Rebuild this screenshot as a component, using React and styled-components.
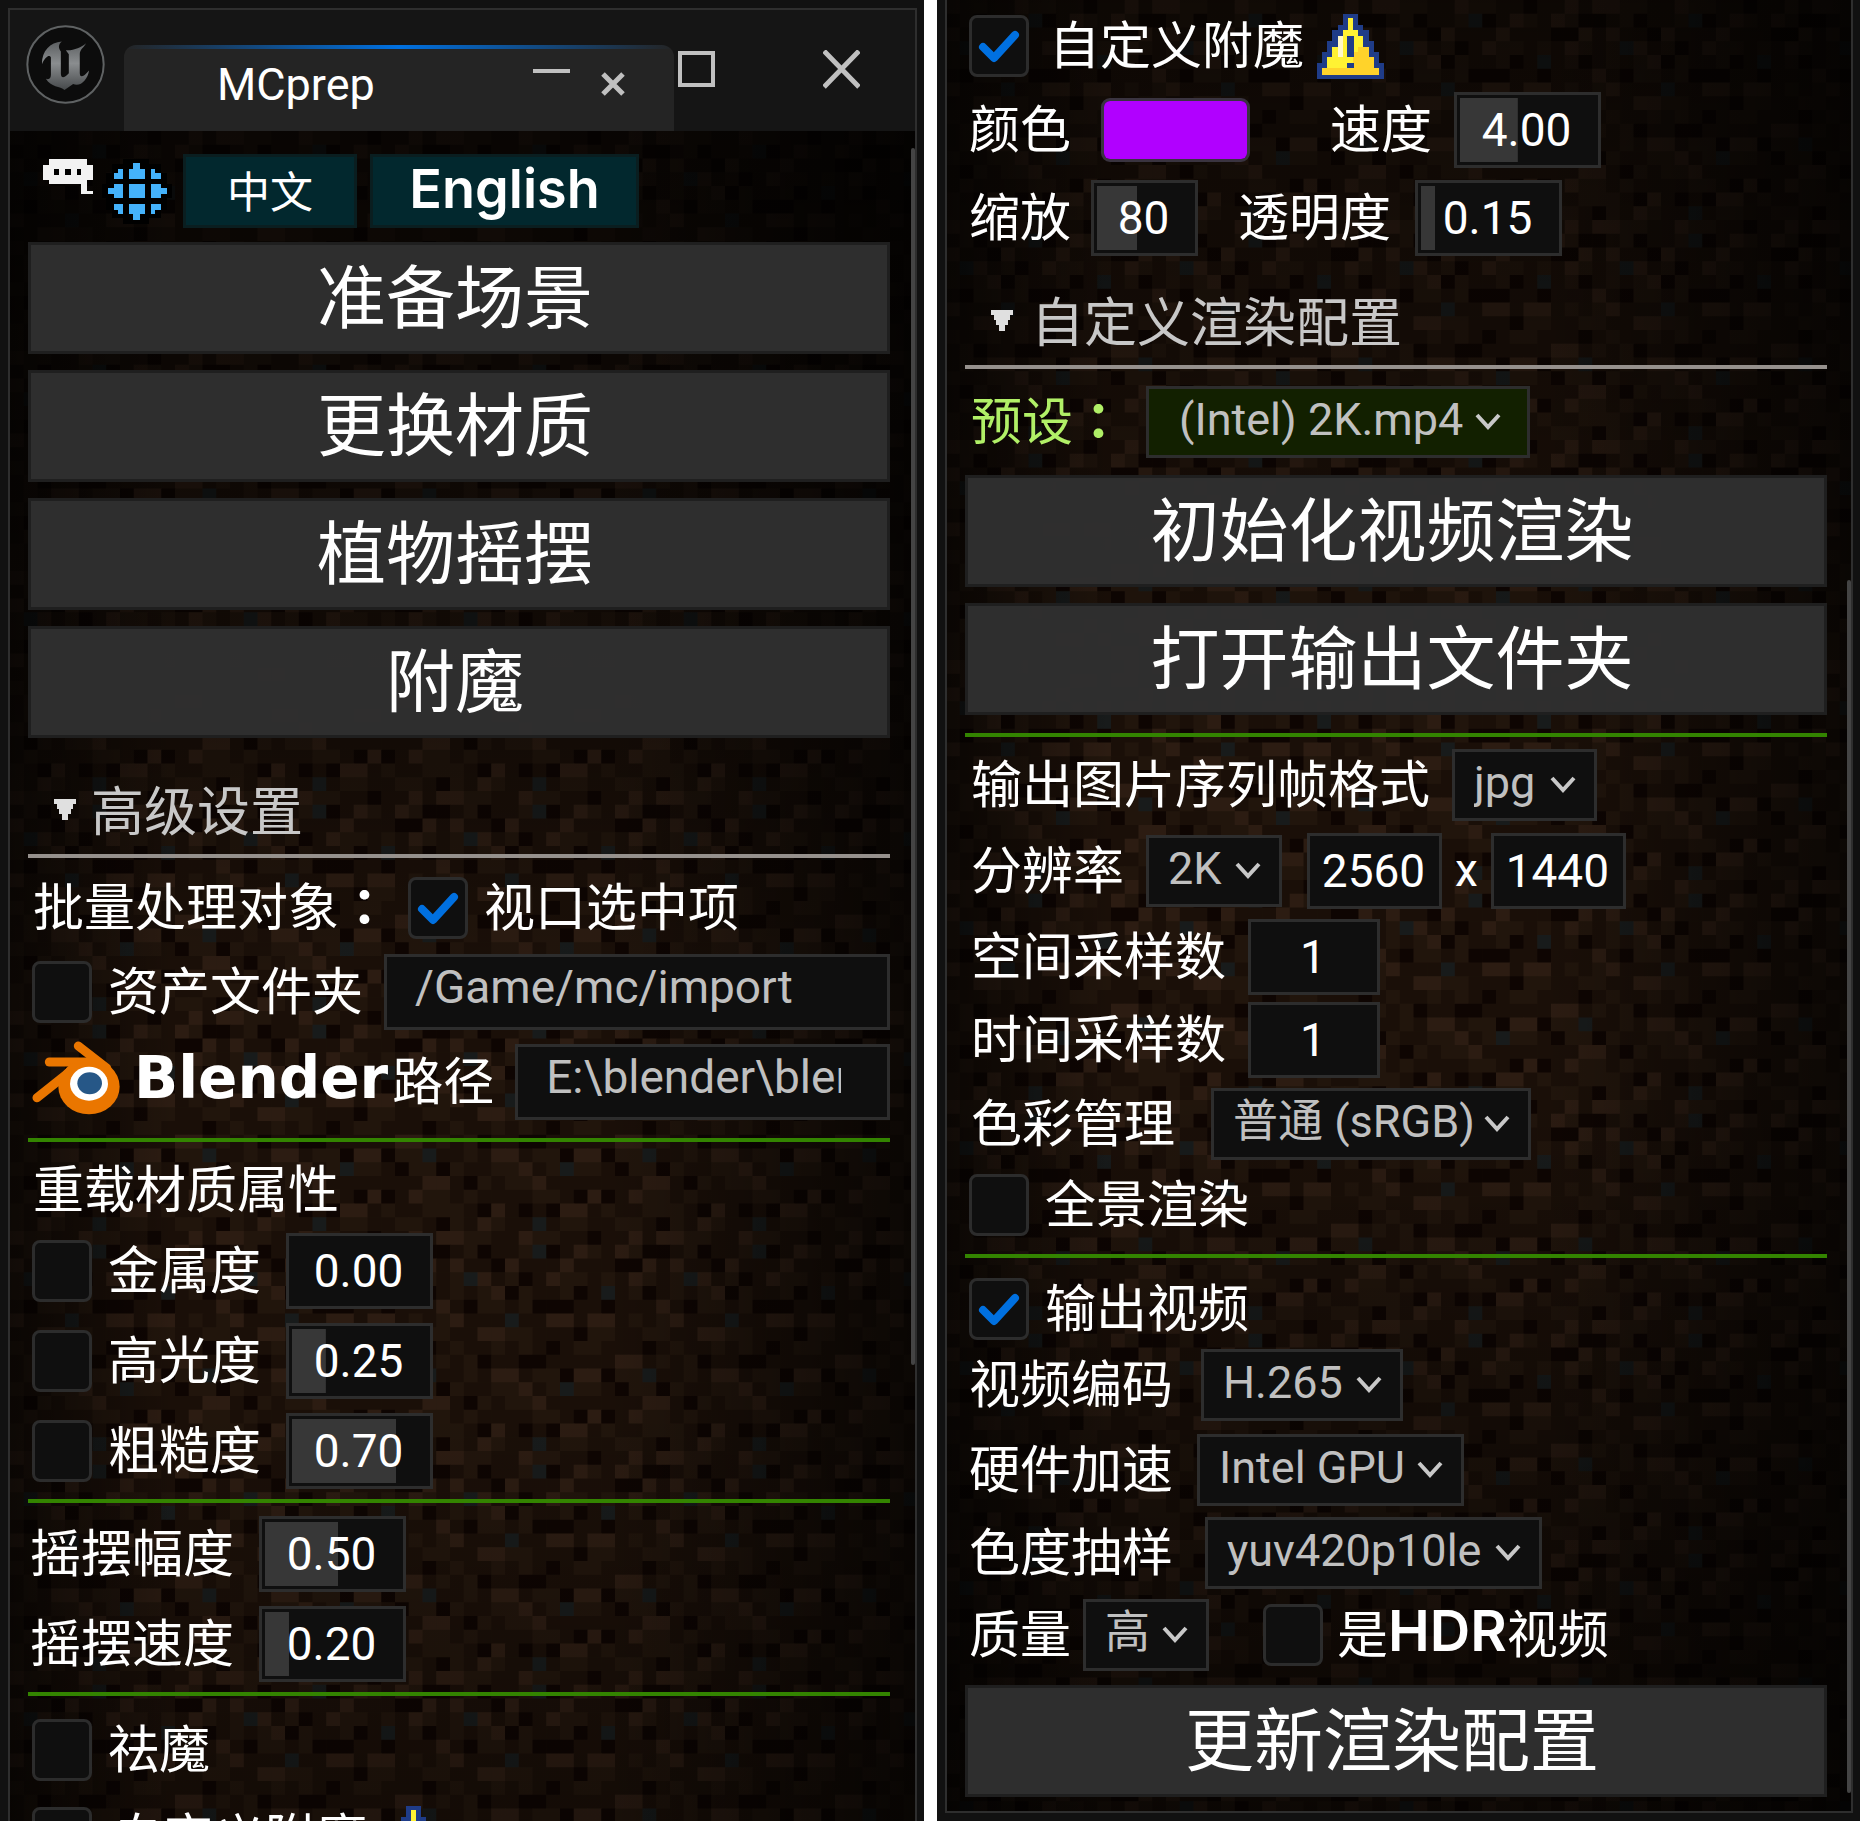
import React, { useState } from 'react';
import styled, { createGlobalStyle, css } from 'styled-components';

const GlobalStyle = createGlobalStyle`
  *, *::before, *::after { box-sizing: border-box; }
  html, body { margin: 0; background: #ffffff; }
  body { overflow: hidden; font-family: "Noto Sans CJK SC", sans-serif; }
  button, input, select { font: inherit; margin: 0; }
`;

const cjk = '"Noto Sans CJK SC", sans-serif';
const latin = 'Roboto, "Noto Sans CJK SC", sans-serif';

const Page = styled.main`
  display: grid;
  grid-template-columns: 924fr 923fr;
  gap: 13px;
  height: 100vh;
`;

const Window = styled.section`
  display: flex;
  min-width: 0;
  min-height: 0;
  padding: ${(p) => p.$pad};
  background: #111111;
`;

const Frame = styled.div`
  flex: 1;
  min-width: 0;
  display: flex;
  flex-direction: column;
  border: 2px solid #2e2e2e;
  border-width: ${(p) => p.$edges};
`;

const TitleBar = styled.header`
  position: relative;
  flex: none;
  display: flex;
  align-items: flex-start;
  height: 121px;
  padding: 15px 0 0 16px;
  background: #151515;
`;

const Tab = styled.div`
  display: flex;
  align-items: center;
  justify-content: space-between;
  width: 550px;
  height: 86px;
  margin: 20px 0 0 19px;
  padding: 0 49px 8px 93px;
  border-radius: 12px 12px 0 0;
  background: linear-gradient(90deg, #242424, #0070e0 50%, #242424) top / 100% 4px no-repeat, #242424;
  color: #ffffff;
  font: 45px/1 ${latin};
`;

const IconButton = styled.button`
  display: flex;
  padding: 0;
  border: 0;
  background: none;
  color: #c0c0c0;
`;

const WindowControls = styled.div`
  position: absolute;
  top: 40px;
  right: 55px;
  display: flex;
  gap: 108px;
`;

const Body = styled.div`
  position: relative;
  flex: 1;
  min-height: 0;
  overflow: hidden;
  padding: ${(p) => p.$pad};
  background: #1a0f08;
`;

const TextureLayer = styled.svg`
  position: absolute;
  inset: 0;
  width: 100%;
  height: 100%;
`;

const Shade = styled.div`
  position: absolute;
  inset: 0;
  background:
    linear-gradient(90deg, rgba(0, 0, 0, 0.6), transparent 18%, transparent 66%, rgba(0, 0, 0, 0.65)),
    ${(p) => p.$vertical};
`;

const ScrollThumb = styled.div`
  position: absolute;
  right: 0;
  top: ${(p) => p.$top};
  bottom: ${(p) => p.$bottom};
  width: 4px;
  border-radius: 2px;
  background: #444444;
`;

const Content = styled.div`
  position: relative;
  display: flex;
  flex-direction: column;
`;

const LanguageBar = styled.div`
  display: flex;
  align-items: center;
  height: 76px;
  margin-bottom: 13px;
  padding-left: 15px;
`;

const LanguageIcons = styled.div`
  display: flex;
  gap: 8px;
  margin-right: 11px;
`;

const LanguageButton = styled.button`
  width: ${(p) => p.$width};
  height: 74px;
  margin-right: 13px;
  padding: 0 0 4px;
  border: 3px solid #0a1e20;
  background: #02282e;
  color: #ffffff;
  font: ${(p) => (p.$bold ? '600 54px/64px Inter, sans-serif' : `43px/64px ${cjk}`)};
`;

const ActionStack = styled.div`
  display: flex;
  flex-direction: column;
  gap: 16px;
  margin-top: ${(p) => p.$before || '0'};
`;

const ActionButton = styled.button`
  height: 112px;
  padding: 0 8px 10px 0;
  border: 3px solid #1f1f1f;
  background: rgba(48, 48, 48, 0.97);
  color: #ffffff;
  font: 69px/1 ${cjk};
`;

const SectionHeader = styled.h2`
  display: flex;
  align-items: center;
  gap: ${(p) => p.$gap || '15px'};
  height: 92px;
  margin: ${(p) => p.$before} 0 0;
  padding: 0 0 4px 26px;
  border-bottom: 4px solid #96918d;
  color: #c8c8c8;
  font: 53px/1 ${cjk};
`;

const Rule = styled.hr`
  width: 100%;
  height: 4px;
  margin: ${(p) => p.$margin || '0'};
  border: 0;
  background: #338400;
`;

const GroupTitle = styled.h3`
  height: 72px;
  margin: 12px 0 0;
  padding-left: 5px;
  color: #ffffff;
  font: 51px/64px ${cjk};
`;

const Row = styled.div`
  display: flex;
  align-items: center;
  height: ${(p) => p.$height};
  padding-left: ${(p) => p.$indent || '4px'};
`;

const Label = styled.label`
  flex: none;
  display: flex;
  align-items: center;
  padding-bottom: 8px;
  margin-left: ${(p) => p.$gap || '0'};
  color: ${(p) => p.$color || '#ffffff'};
  font: 51px/1 ${cjk};
  white-space: nowrap;
`;

const Colon = styled.span`
  font-family: "Noto Sans CJK TC", sans-serif;
  font-weight: 700;
`;

const Wordmark = styled.span`
  padding-right: ${(p) => p.$after || '0'};
  font: ${(p) => p.$font};
`;

const CheckWrap = styled.span`
  flex: none;
  display: grid;
  place-items: center;
  margin-left: ${(p) => p.$gap || '0'};
  > * { grid-area: 1 / 1; }
  > svg { pointer-events: none; }
`;

const CheckBox = styled.input`
  appearance: none;
  width: 60px;
  height: 62px;
  border: 3px solid #2c2c2c;
  border-radius: 8px;
  background: #0f0f0f;
`;

const fieldLook = css`
  height: 76px;
  border: 3px solid #2d2d2d;
  border-radius: 0;
  background: #0f0f0f;
  outline: 0;
`;

const PathInput = styled.input`
  ${fieldLook}
  flex: 1;
  min-width: 0;
  margin-left: 21px;
  padding: 0 46px 10px 28px;
  color: #c0c0c0;
  font: 46px/60px ${latin};
`;

const NumberInput = styled.input`
  ${fieldLook}
  flex: none;
  width: ${(p) => p.$width || '147px'};
  margin-left: ${(p) => p.$gap || '22px'};
  padding: 0 2px 0 0;
  background: linear-gradient(#373737, #373737) 3px 3px / ${(p) => p.$fill || 0}% calc(100% - 6px) no-repeat, #0f0f0f;
  color: #ffffff;
  text-align: center;
  font: 46px/60px ${latin};
`;

const SelectWrap = styled.span`
  flex: none;
  display: grid;
  align-items: center;
  margin-left: ${(p) => p.$gap || '22px'};
  > * { grid-area: 1 / 1; }
  > svg {
    justify-self: end;
    margin-right: ${(p) => (p.$preset ? '28px' : '20px')};
    pointer-events: none;
  }
`;

const Select = styled.select`
  ${fieldLook}
  appearance: none;
  width: ${(p) => p.$width};
  height: 72px;
  padding: 0 0 4px ${(p) => (p.$preset ? '30px' : '19px')};
  background: ${(p) => (p.$preset ? '#122000' : '#0f0f0f')};
  color: #c0c0c0;
  font: 45px/60px ${latin};
`;

const Swatch = styled.input`
  appearance: none;
  width: 149px;
  height: 64px;
  margin-left: 30px;
  padding: 0;
  border: 3px solid #3a3440;
  border-radius: 9px;
  background: #b100ff;
  overflow: hidden;
  &::-webkit-color-swatch-wrapper { padding: 0; }
  &::-webkit-color-swatch { border: 0; }
`;

const Times = styled.span`
  padding: 0 13px 2px;
  color: #ffffff;
  font: 46px/1 ${latin};
`;

const WarningGlyph = styled.svg`
  flex: none;
  margin-left: 13px;
`;

const TILE = [
  'BBDBBLBLLMMBBLMM',
  'BLMBLMDDBMDBBMXD',
  'LBBBDDLBLBBDLBBB',
  'MMBMBLMBMXLBMDBL',
  'MDBXBMDBMBMLDMBB',
  'DBBDBBBLBDMMBMDD',
  'LBLLBMBMLBBBXBBL',
  'BDMMBBMMBBLLMMBB',
  'BMMBBBDBMBBMBMBD',
  'BBBBLLBMBMDBBDDB',
  'DLLDMMXBBMBLLBMM',
  'XMMBDMMDMBBMMLBM',
  'BBBBBBLLBDMBMMLB',
  'BDLDBLMMBMBBBBMM',
  'LLBMBBMMMBDLBDBD',
  'MMBBMMBDMBLMBBXB',
];
const TONES = { B: '#1a0f08', D: '#0e0502', M: '#21150c', L: '#2c1c12', X: '#181b1b' };

function Dirt({ id, x, y }) {
  return (
    <TextureLayer aria-hidden="true">
      <defs>
        <pattern id={id} patternUnits="userSpaceOnUse" x={x} y={y} width="220" height="220" viewBox="0 0 16 16">
          {TILE.map((line, r) =>
            [...line].map((tone, c) => (
              <rect key={`${r}-${c}`} x={c} y={r} width="1.04" height="1.04" fill={TONES[tone]} />
            ))
          )}
        </pattern>
      </defs>
      <rect width="100%" height="100%" fill={`url(#${id})`} />
    </TextureLayer>
  );
}

const EngineLogo = () => (
  <svg width="79" height="79" viewBox="76 74 238 238" aria-hidden="true">
    <defs>
      <linearGradient id="steel" x1="0" y1="0" x2="0" y2="1">
        <stop offset="0" stopColor="#5c5f61" />
        <stop offset="0.45" stopColor="#8a8d8f" />
        <stop offset="1" stopColor="#45484a" />
      </linearGradient>
    </defs>
    <circle cx="195" cy="193" r="115" fill="#0c0c0c" stroke="#5f6263" strokeWidth="6" />
    <path
      fill="url(#steel)"
      d="M124 192C124 152 148 127 184 124C174 132 172 142 181 154V220C181 234 190 236 205 219V162L196 150C218 152 242 142 257 129C250 142 238 148 238 162V218C238 234 248 232 266 211C262 238 240 262 218 252L192 270C180 258 150 262 136 236C146 240 151 234 151 224V172C148 162 134 168 124 192Z"
    />
  </svg>
);

const Speech = () => (
  <svg width="50" height="58" viewBox="129 492 150 174" shapeRendering="crispEdges" aria-hidden="true">
    <path fill="#f2f2f2" d="M147 495H260V512H278V558H260V590H278V601H242V571H147V558H129V512H147Z" />
    <path fill="#000" d="M163 524h15v18h-15zM195 524h18v18h-18zM230 524h12v18h-12z" />
  </svg>
);

const Globe = () => (
  <svg width="71" height="66" viewBox="304 480 213 198" shapeRendering="crispEdges" aria-hidden="true">
    <path fill="#000" d="M371 482H449V498H484V525H501V559H517V601H501V635H484V660H449V678H371V660H336V635H320V601H306V559H320V525H336V498H371Z" />
    <path
      fill="#44b2fb"
      d="M400 495h20v17h17v30h-48v-30h11zM389 559h48v42h-48zM389 618h48v30h-17v17h-20v-17h-11zM371 559v42h-29v-12h-17v-18h17v-12zM454 559h29v12h18v18h-18v12h-29zM354 512h17v30h-29v-17h12zM454 512h13v13h17v17h-30zM342 618h29v30h-17v-13h-12zM454 618h30v17h-17v13h-13z"
    />
  </svg>
);

const BlenderMark = styled.svg`
  flex: none;
  margin-bottom: 8px;
`;

const BlenderLogo = () => (
  <BlenderMark width="88" height="74" viewBox="38 31 264 222" aria-hidden="true">
    <g fill="none" stroke="#ea7600" strokeWidth="27" strokeLinecap="round" strokeLinejoin="round">
      <path d="M177 46L262 112" />
      <path d="M90 94H232" />
      <path d="M53 201L150 124" />
    </g>
    <ellipse cx="209" cy="168" rx="92" ry="83" fill="#ea7600" />
    <path d="M150 100L215 95L270 115L150 160Z" fill="#ea7600" />
    <ellipse cx="209" cy="159" rx="57" ry="51" fill="#fff" />
    <ellipse cx="211" cy="158" rx="37" ry="33" fill="#265787" />
  </BlenderMark>
);

const Warning = () => (
  <WarningGlyph width="67" height="65" viewBox="0 0 13 12" preserveAspectRatio="none" shapeRendering="crispEdges" role="img" aria-label="warning">
    <path fill="#1f3c88" d="M5 0h3v2h1v1h1v2h1v2h1v2h1v3H0V9h1V7h1V5h1V3h1V2h1z" />
    <path fill="#fff233" d="M6 0.7h1V3h1v1h1v2h1v2h1v2h1v1.2H1V10h1V8h1V6h1V4h1V3h1z" />
    <path fill="#ffd32a" d="M8 6h2v2h1v2h1v1.2H1V10h5V9h1V7h1z" />
    <path fill="#fff8c8" d="M4 4h1v4H4z" />
    <path fill="#1f3c88" d="M5.9 4h1.2v4H5.9zM5.9 9h1.2v1H5.9z" />
  </WarningGlyph>
);

const Triangle = () => (
  <svg width="22" height="24" viewBox="0 0 22 24" aria-hidden="true">
    <path fill="#e0e0e0" d="M0 3H22V8H19V13H17V18H14V24H8V18H5V13H3V8H0Z" />
  </svg>
);

const Chevron = () => (
  <svg width="28" height="20" viewBox="0 0 28 20" aria-hidden="true">
    <path d="M3 3L14 15L25 3" fill="none" stroke="#c8c8c8" strokeWidth="4" />
  </svg>
);

const Tick = () => (
  <svg width="42" height="34" viewBox="0 0 42 34" aria-hidden="true">
    <path d="M5 18L16 29L37 6" fill="none" stroke="#0070e0" strokeWidth="8" strokeLinecap="round" strokeLinejoin="round" />
  </svg>
);

function Check({ id, initial = false, gap }) {
  const [on, setOn] = useState(initial);
  return (
    <CheckWrap $gap={gap}>
      <CheckBox id={id} type="checkbox" checked={on} onChange={(e) => setOn(e.target.checked)} />
      {on && <Tick />}
    </CheckWrap>
  );
}

function Choice({ id, value, width, gap, preset }) {
  return (
    <SelectWrap $gap={gap} $preset={preset}>
      <Select id={id} $width={width} $preset={preset} defaultValue={value}>
        <option>{value}</option>
      </Select>
      <Chevron />
    </SelectWrap>
  );
}

function CheckedNumber({ id, label, value, fill }) {
  return (
    <Row $height="90px">
      <Check id={`${id}-on`} />
      <Label htmlFor={`${id}-on`} $gap="16px">{label}</Label>
      <NumberInput aria-label={label} defaultValue={value} $fill={fill} $gap="25px" />
    </Row>
  );
}

function LabelledNumber({ id, label, value, fill, height, width, indent, gap }) {
  return (
    <Row $height={height} $indent={indent}>
      <Label htmlFor={id}>{label}</Label>
      <NumberInput id={id} defaultValue={value} $fill={fill} $width={width} $gap={gap} />
    </Row>
  );
}

function LabelledChoice({ id, label, value, height, width, indent, gap }) {
  return (
    <Row $height={height} $indent={indent}>
      <Label htmlFor={id}>{label}</Label>
      <Choice id={id} value={value} width={width} gap={gap} />
    </Row>
  );
}

function CustomEnchant({ id }) {
  return (
    <Row $height="92px">
      <Check id={id} initial />
      <Label htmlFor={id} $gap="20px">自定义附魔</Label>
      <Warning />
    </Row>
  );
}

function MainWindow() {
  return (
    <Window $pad="8px 7px 0 8px">
      <Frame $edges="2px 2px 0">
        <TitleBar>
          <EngineLogo />
          <Tab>
            <span>MCprep</span>
            <IconButton aria-label="close tab">
              <svg width="24" height="26" viewBox="0 0 24 26"><path d="M2 3L22 23M22 3L2 23" stroke="currentColor" strokeWidth="5" /></svg>
            </IconButton>
          </Tab>
          <WindowControls>
            <IconButton aria-label="minimize">
              <svg width="37" height="40" viewBox="0 0 37 40"><path d="M0 21H37" stroke="currentColor" strokeWidth="4" /></svg>
            </IconButton>
            <IconButton aria-label="maximize">
              <svg width="37" height="40" viewBox="0 0 37 40"><path d="M2 3H35V35H2Z" fill="none" stroke="currentColor" strokeWidth="4" /></svg>
            </IconButton>
            <IconButton aria-label="close">
              <svg width="37" height="40" viewBox="0 0 37 40"><path d="M1 1L36 37M36 1L1 37" stroke="currentColor" strokeWidth="5" /></svg>
            </IconButton>
          </WindowControls>
        </TitleBar>
        <Body $pad="22px 25px 0 18px">
          <Dirt id="dirt-main" x="110" y="0" />
          <Shade $vertical="linear-gradient(180deg, rgba(0,0,0,.68), rgba(0,0,0,.35) 32%, transparent 50%, transparent 75%, rgba(0,0,0,.25))" />
          <ScrollThumb $top="17px" $bottom="27%" />
          <Content>
            <LanguageBar>
              <LanguageIcons>
                <Speech />
                <Globe />
              </LanguageIcons>
              <LanguageButton $width="174px">中文</LanguageButton>
              <LanguageButton $width="269px" $bold>English</LanguageButton>
            </LanguageBar>
            <ActionStack>
              <ActionButton>准备场景</ActionButton>
              <ActionButton>更换材质</ActionButton>
              <ActionButton>植物摇摆</ActionButton>
              <ActionButton>附魔</ActionButton>
            </ActionStack>
            <SectionHeader $before="28px"><Triangle />高级设置</SectionHeader>
            <Row $height="100px" $indent="5px">
              <Label htmlFor="selected">批量处理对象<Colon>：</Colon></Label>
              <Check id="selected" initial gap="18px" />
              <Label htmlFor="selected" $gap="16px">视口选中项</Label>
            </Row>
            <Row $height="68px">
              <Check id="folder" />
              <Label htmlFor="folder" $gap="16px">资产文件夹</Label>
              <PathInput aria-label="资产文件夹" defaultValue="/Game/mc/import" />
            </Row>
            <Row $height="112px">
              <BlenderLogo />
              <Label htmlFor="blender" $gap="14px">
                <Wordmark $font='700 58px/1 "DejaVu Sans", sans-serif' $after="4px">Blender</Wordmark>
                路径
              </Label>
              <PathInput id="blender" defaultValue="E:\blender\blender.exe" />
            </Row>
            <Rule />
            <GroupTitle>重载材质属性</GroupTitle>
            <CheckedNumber id="metal" label="金属度" value="0.00" />
            <CheckedNumber id="specular" label="高光度" value="0.25" fill={24} />
            <CheckedNumber id="rough" label="粗糙度" value="0.70" fill={74} />
            <Rule $margin="3px 0 6px" />
            <LabelledNumber id="sway" label="摇摆幅度" value="0.50" fill={52} height="90px" indent="2px" gap="25px" />
            <LabelledNumber id="sway-speed" label="摇摆速度" value="0.20" fill={17} height="90px" indent="2px" gap="25px" />
            <Rule $margin="3px 0 12px" />
            <Row $height="84px">
              <Check id="disenchant" />
              <Label htmlFor="disenchant" $gap="16px">祛魔</Label>
            </Row>
            <CustomEnchant id="enchant-main" />
          </Content>
        </Body>
      </Frame>
    </Window>
  );
}

function RenderWindow() {
  return (
    <Window $pad="0 7px 8px 8px">
      <Frame $edges="0 2px 2px">
        <Body $pad="0 24px 0 18px">
          <Dirt id="dirt-render" x="109" y="0" />
          <Shade $vertical="linear-gradient(180deg, rgba(0,0,0,.5), rgba(0,0,0,.2) 25%, transparent 40%, transparent 60%, rgba(0,0,0,.6))" />
          <ScrollThumb $top="32%" $bottom="18px" />
          <Content>
            <CustomEnchant id="enchant-side" />
            <Row $height="76px">
              <Label htmlFor="color">颜色</Label>
              <Swatch id="color" type="color" defaultValue="#b100ff" />
              <Label htmlFor="speed" $gap="80px">速度</Label>
              <NumberInput id="speed" defaultValue="4.00" $fill={41} />
            </Row>
            <Row $height="100px">
              <Label htmlFor="scale">缩放</Label>
              <NumberInput id="scale" defaultValue="80" $fill={40} $width="107px" $gap="20px" />
              <Label htmlFor="alpha" $gap="40px">透明度</Label>
              <NumberInput id="alpha" defaultValue="0.15" $fill={10} $gap="24px" />
            </Row>
            <SectionHeader $before="9px" $gap="18px"><Triangle />自定义渲染配置</SectionHeader>
            <Row $height="106px" $indent="6px">
              <Label htmlFor="preset" $color="#b1f067">预设<Colon>：</Colon></Label>
              <Choice id="preset" value="(Intel) 2K.mp4" width="384px" preset />
            </Row>
            <ActionStack>
              <ActionButton>初始化视频渲染</ActionButton>
              <ActionButton>打开输出文件夹</ActionButton>
            </ActionStack>
            <Rule $margin="18px 0 6px" />
            <LabelledChoice id="format" label="输出图片序列帧格式" value="jpg" width="145px" height="84px" indent="6px" />
            <Row $height="88px" $indent="6px">
              <Label htmlFor="resolution">分辨率</Label>
              <Choice id="resolution" value="2K" width="136px" />
              <NumberInput aria-label="宽" defaultValue="2560" $width="135px" $gap="25px" />
              <Times>x</Times>
              <NumberInput aria-label="高" defaultValue="1440" $width="135px" $gap="0" />
            </Row>
            <LabelledNumber id="spatial" label="空间采样数" value="1" width="132px" height="84px" indent="6px" />
            <LabelledNumber id="temporal" label="时间采样数" value="1" width="132px" height="82px" indent="6px" />
            <LabelledChoice id="colorspace" label="色彩管理" value="普通 (sRGB)" width="320px" height="86px" indent="6px" gap="36px" />
            <Row $height="76px">
              <Check id="panorama" />
              <Label htmlFor="panorama" $gap="16px">全景渲染</Label>
            </Row>
            <Rule $margin="11px 0 15px" />
            <Row $height="72px">
              <Check id="video" initial />
              <Label htmlFor="video" $gap="16px">输出视频</Label>
            </Row>
            <LabelledChoice id="codec" label="视频编码" value="H.265" width="202px" height="80px" gap="28px" />
            <LabelledChoice id="accel" label="硬件加速" value="Intel GPU" width="267px" height="90px" gap="24px" />
            <LabelledChoice id="chroma" label="色度抽样" value="yuv420p10le" width="337px" height="76px" gap="32px" />
            <Row $height="88px">
              <Label htmlFor="quality">质量</Label>
              <Choice id="quality" value="高" width="126px" gap="12px" />
              <Check id="hdr" gap="54px" />
              <Label htmlFor="hdr" $gap="14px">
                是<Wordmark $font="600 56px/1 Inter, sans-serif">HDR</Wordmark>视频
              </Label>
            </Row>
            <ActionStack $before="6px">
              <ActionButton>更新渲染配置</ActionButton>
            </ActionStack>
          </Content>
        </Body>
      </Frame>
    </Window>
  );
}

export default function App() {
  return (
    <>
      <GlobalStyle />
      <Page>
        <MainWindow />
        <RenderWindow />
      </Page>
    </>
  );
}
